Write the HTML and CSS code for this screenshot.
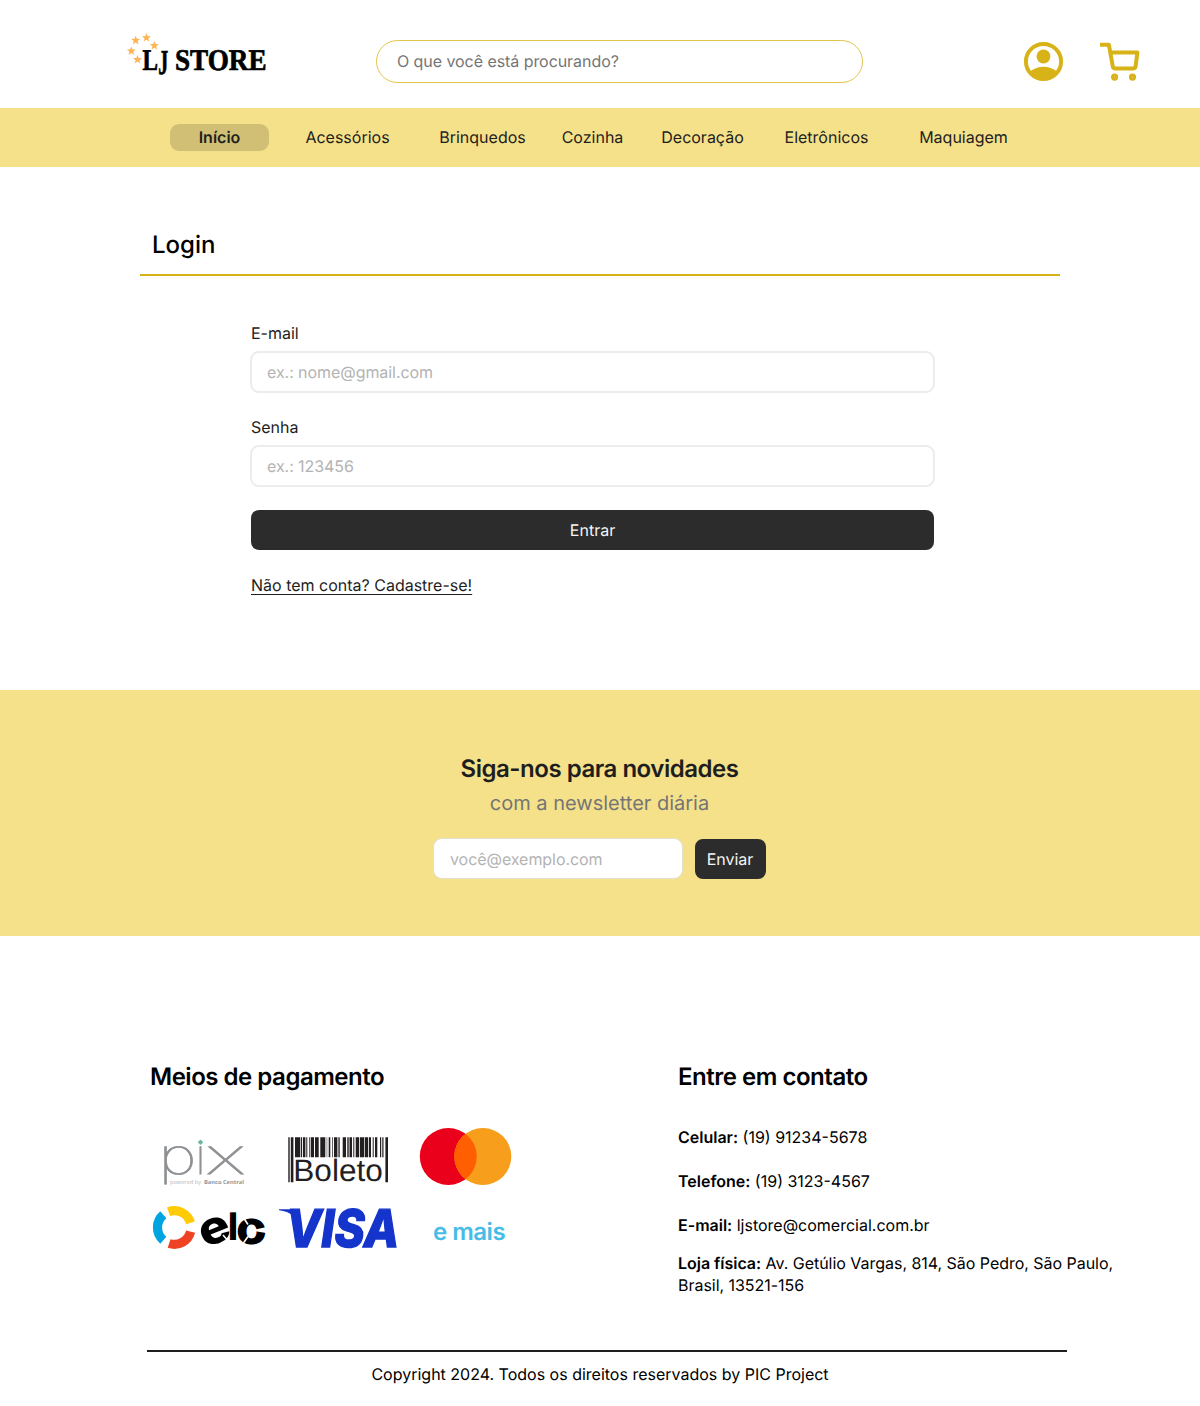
FILE: index.html
```html
<!DOCTYPE html>
<html lang="pt-BR">
<head>
<meta charset="utf-8">
<title>LJ Store - Login</title>
<link rel="stylesheet" href="styles.css">
</head>
<body>
<header class="header">
  <a class="brand" aria-label="LJ Store">
    <svg width="144" height="46" viewBox="0 0 144 46">
      <defs><path id="star" d="M0-4.6 1.2-1.5 4.5-1.4 1.9.7 2.8 3.9 0 2.1-2.8 3.9-1.9.7-4.5-1.4-1.2-1.5Z"/></defs>
      <g fill="#fdb454">
        <use href="#star" x="9.7" y="8.3"/><use href="#star" x="20.4" y="5.7"/><use href="#star" x="28.3" y="13.6"/><use href="#star" x="5.3" y="19"/><use href="#star" x="11.5" y="27.5"/>
      </g>
      <g class="brand-text">
        <text x="16.5" y="38" textLength="15.5" lengthAdjust="spacingAndGlyphs">L</text>
        <text class="brand-j" x="32.2" y="41.5" textLength="10" lengthAdjust="spacingAndGlyphs">J</text>
        <text x="49" y="38" textLength="91.5" lengthAdjust="spacingAndGlyphs">STORE</text>
      </g>
    </svg>
  </a>
  <input class="search" type="text" placeholder="O que você está procurando?">
  <div class="actions">
    <svg width="40" height="40" viewBox="-.5 -.5 40 40" fill="#d7b318">
      <circle cx="20" cy="20" r="17.6" fill="none" stroke="#d7b318" stroke-width="4"/>
      <circle cx="20" cy="15" r="6.9"/>
      <path d="M6.5 30Q12.5 25.2 20 25.2T33.5 30Q28.5 38 20 38T6.5 30Z"/>
    </svg>
    <svg width="40" height="40" viewBox="0 -1 40 40" fill="none" stroke="#d7b318">
      <path d="M0 2.8H8.9L12.8 24.4Q13.2 26.5 15.4 26.5H33Q35.2 26.5 35.6 24.4L37.4 10.5H10.6" stroke-width="4" stroke-linejoin="round"/>
      <g fill="#e0c452" stroke-width="2.8"><circle cx="14.6" cy="35.1" r="2.2"/><circle cx="32.5" cy="35.1" r="2.2"/></g>
    </svg>
  </div>
</header>

<nav class="nav">
  <a class="active">Início</a><a>Acessórios</a><a>Brinquedos</a><a>Cozinha</a><a>Decoração</a><a>Eletrônicos</a><a>Maquiagem</a>
</nav>

<main class="login">
  <h1>Login</h1>
  <form class="form">
    <label class="field">E-mail<input type="text" placeholder="ex.: nome@gmail.com"></label>
    <label class="field">Senha<input type="text" placeholder="ex.: 123456"></label>
    <button class="btn" type="button">Entrar</button>
    <a class="signup">Não tem conta? Cadastre-se!</a>
  </form>
</main>

<section class="newsletter">
  <h2>Siga-nos para novidades</h2>
  <p>com a newsletter diária</p>
  <form class="subscribe">
    <input type="text" placeholder="você@exemplo.com">
    <button class="btn" type="button">Enviar</button>
  </form>
</section>

<footer class="footer">
  <div class="columns">
    <section>
      <h2>Meios de pagamento</h2>
      <div class="payments">
        <svg width="120" height="60" viewBox="0 0 120 60">
          <g class="pix">
            <text x="8.6" y="46" textLength="38" lengthAdjust="spacingAndGlyphs">p</text>
            <text x="45" y="46" textLength="11" lengthAdjust="spacingAndGlyphs">ı</text>
            <text x="55.5" y="46" textLength="40" lengthAdjust="spacingAndGlyphs">x</text>
          </g>
          <rect x="-2" y="-2" width="4" height="4" rx=".8" fill="#6bb7a4" transform="translate(50.5 14.2) rotate(45)"/>
          <g class="pix-note">
            <text x="20" y="56" textLength="31" lengthAdjust="spacingAndGlyphs">powered by</text>
            <text class="bank" x="54" y="56" textLength="40" lengthAdjust="spacingAndGlyphs">Banco Central</text>
          </g>
        </svg>
        <svg width="120" height="60" viewBox="0 0 120 60">
          <g fill="#231f20">
            <path d="M10.3 9.3h1.4v45h-1.4zM12.8 9.3h2.6v45h-2.6zM107.4 9.3h2.6v45h-2.6z"/>
            <path d="M17 9.3h5v20h-5zM22.7 9.3h1.4v20h-1.4zM25 9.3h2.4v20h-2.4zM28.3 9.3h1v20h-1zM31.3 9.3h1v20h-1zM33 9.3h3v20h-3zM37 9.3h3.7v20H37zM42.3 9.3h5v20h-5zM48.7 9.3h.5v20h-.5zM50.7 9.3h1.6v20h-1.6zM54 9.3h.7v20H54zM56 9.3h3.4v20H56zM60.4 9.3h1.3v20h-1.3zM64.7 9.3H68v20h-3.3zM69.3 9.3h1.4v20h-1.4zM71.5 9.3h2.5v20h-2.5zM75.3 9.3h1v20h-1zM77.7 9.3h3.5v20h-3.5zM82 9.3h4v20h-4zM86.7 9.3h3.5v20h-3.5zM91 9.3h2v20h-2zM94.7 9.3h1v20h-1zM97 9.3h2.3v20H97zM102 9.3h1.2v20H102zM104.3 9.3h1.2v20h-1.2z"/>
            <text class="boleto" x="15.3" y="52.6" textLength="89.5" lengthAdjust="spacingAndGlyphs">Boleto</text>
          </g>
        </svg>
        <svg width="120" height="60" viewBox="0 0 120 60">
          <circle cx="42.3" cy="28.5" r="28.5" fill="#eb001b"/>
          <circle cx="76.8" cy="28.5" r="28.5" fill="#f79f1c"/>
          <path d="M59.55 5.8a28.5 28.5 0 0 1 0 45.4a28.5 28.5 0 0 1 0-45.4Z" fill="#ff5f00"/>
        </svg>
        <svg width="120" height="56" viewBox="0 0 120 56">
          <g fill="none" stroke-width="9.2">
            <path d="M18.55 11.7A16.8 16.8 0 0 1 40.45 22.87" stroke="#ffcb05"/>
            <path d="M40.6 31.56A16.8 16.8 0 0 1 19.1 43.5" stroke="#ef4123"/>
            <path d="M13.3 40.2A16.8 16.8 0 0 1 13.3 14.8" stroke="#00a4e0"/>
          </g>
          <g class="elo">
            <text x="49" y="43.5" textLength="31" lengthAdjust="spacingAndGlyphs" transform="rotate(-22 64.5 30.5)">e</text>
            <text class="elo-l" x="78" y="40" textLength="10" lengthAdjust="spacingAndGlyphs">l</text>
            <text x="86" y="43.5" textLength="31" lengthAdjust="spacingAndGlyphs">o</text>
          </g>
          <path d="M73 35 79 42M92 15.5 98 24.5M92 45 98 36.5" stroke="#fff" stroke-width="1.6"/>
          <path d="M101 30.5 119 26.5V33.5Z" fill="#fff"/>
        </svg>
        <svg width="120" height="56" viewBox="0 0 120 56" fill="#1434cb">
          <path d="M1 9.3H16Q21 9.3 22 14L24 30Q18 12 1 10.3Z"/>
          <text class="visa" x="8" y="47.2" textLength="113" lengthAdjust="spacingAndGlyphs">VISA</text>
        </svg>
        <span class="more">e mais</span>
      </div>
    </section>
    <section>
      <h2>Entre em contato</h2>
      <div class="contacts">
        <p><b>Celular:</b> (19) 91234-5678</p>
        <p><b>Telefone:</b> (19) 3123-4567</p>
        <p><b>E-mail:</b> ljstore@comercial.com.br</p>
        <p class="address"><b>Loja física:</b> Av. Getúlio Vargas, 814, São Pedro, São Paulo,<br>Brasil, 13521-156</p>
      </div>
    </section>
  </div>
  <p class="copyright">Copyright 2024. Todos os direitos reservados by PIC Project</p>
</footer>
</body>
</html>
```

FILE: styles.css
```css
* { box-sizing: border-box; }
body { margin: 0; background: #fff; color: #1e1e1e; font: 16px/22px Inter, sans-serif; text-rendering: geometricPrecision; }
h1, h2, p { margin: 0; }
svg { display: block; overflow: visible; }
input, button { font: inherit; text-rendering: inherit; }
input { outline: 0; background: #fff; }
input::placeholder { color: #b3b3b3; opacity: 1; letter-spacing: -.06px; }

.header { display: flex; height: 108px; padding: 32px 60px 0 126px; }
.brand { width: 250px; }
.brand-text { font: bold 30px "Liberation Serif", serif; fill: #000; stroke: #000; stroke-width: .7px; }
.brand-j { font-size: 35px; }
.search { width: 487px; height: 43px; margin-top: 8px; padding: 0 20px 2px; border: 1px solid #e2c64b; border-radius: 22px; }
.search::placeholder { color: #757575; }
.actions { display: flex; gap: 37px; margin: 9px 0 0 auto; }

.nav { display: grid; grid-template-columns: 99px 157px 113px 107px 113px 135px 139px; height: 59px; padding: 16px 0 16px 170px; background: #f5e18a; line-height: 27px; text-align: center; }
.nav .active { background: #d1bf75; border-radius: 9px; font-weight: 600; }

.login { height: 523px; padding: 60px 140px 0; }
.login h1 { height: 49px; padding: 0 12px; border-bottom: 2px solid #d7b318; color: #000; font-size: 24px; font-weight: 500; line-height: 36px; }
.form { display: flex; flex-direction: column; align-items: flex-start; width: 685px; margin: 46px 0 0 110px; }
.field { display: flex; flex-direction: column; gap: 7px; width: 100%; margin-bottom: 23px; text-indent: 1px; }
.field input { height: 42px; padding: 0 15px; border: 2px solid #ececec; border-radius: 9px; }
.btn { height: 40px; padding: 0 12px; border: 0; border-radius: 8px; background: #2c2c2c; color: #f5f5f5; }
.form .btn { width: 683px; margin: 0 1px 24px; }
.signup { margin-left: 1px; text-decoration: underline; text-decoration-thickness: 1px; text-underline-offset: 3px; }

.newsletter { display: flex; flex-direction: column; align-items: center; height: 246px; padding: 64px 1px 0 0; background: #f5e18a; }
.newsletter h2, .footer h2 { font-size: 24px; font-weight: 600; line-height: 29px; letter-spacing: -.02em; }
.newsletter p { margin-top: 8px; color: #757575; font-size: 20px; line-height: 24px; }
.subscribe { display: flex; gap: 12px; margin-top: 24px; }
.subscribe input { width: 250px; height: 41px; margin-top: -1px; padding: 0 16px; border: 1px solid #e3dfcf; border-radius: 9px; }
.subscribe .btn { width: 71px; padding: 0 1px 0 0; }

.footer { padding-top: 126px; color: #000; }
.columns { display: grid; grid-template-columns: 528px 450px; height: 288px; padding-left: 150px; }
.payments { display: grid; grid-template-columns: repeat(3, 120px); grid-template-rows: 60px 56px; gap: 12px 8px; margin-top: 37px; }
.more { padding-left: 6px; color: #46bce6; font-size: 24px; font-weight: 600; line-height: 64px; letter-spacing: -.02em; text-align: center; }
.contacts { display: flex; flex-direction: column; gap: 22px; margin-top: 35px; }
.contacts b { font-weight: 600; }
.contacts .address { margin-top: -6px; letter-spacing: -.03px; }
.copyright { margin: 0 133px 0 147px; padding: 11px 14px 0 0; border-top: 2px solid #1e1e1e; text-align: center; }

.pix { font: 100 50px Inter, sans-serif; fill: #8e9093; stroke: #8e9093; stroke-width: .8px; }
.pix-note { font: 5.5px "Open Sans", sans-serif; fill: #b5b5b5; }
.pix-note .bank { font-weight: 700; fill: #949698; }
.boleto { font: 31px "Liberation Sans", sans-serif; }
.elo { font: 800 46px Inter, sans-serif; fill: #000; }
.elo-l { font-size: 38px; }
.visa { font: italic 800 52px Inter, sans-serif; stroke: #1434cb; stroke-width: 1.4px; }
```
